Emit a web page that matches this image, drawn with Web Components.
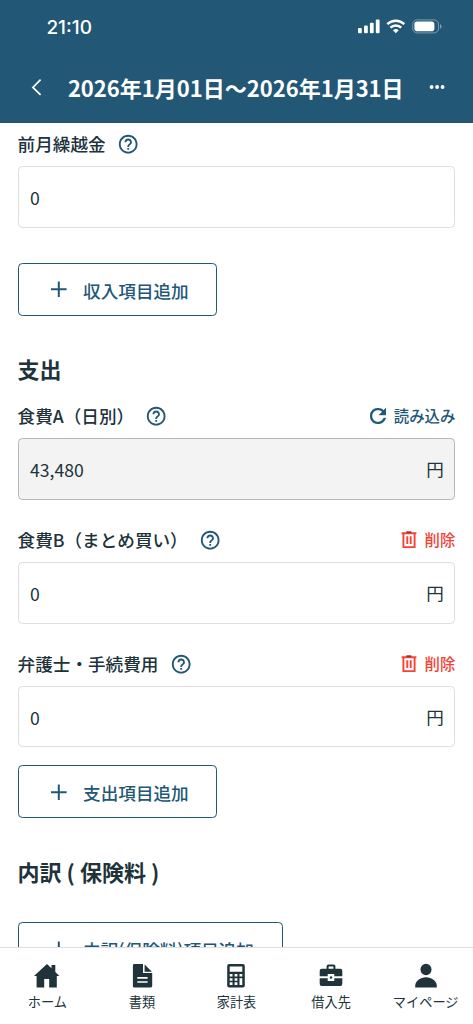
<!DOCTYPE html>
<html lang="ja">
<head>
<meta charset="utf-8">
<title>家計表</title>
<style>
html,body{margin:0;height:100%;overflow:hidden;background:#fff}
body{font-family:"Noto Sans CJK JP",sans-serif;color:#20323a}
</style>
</head>
<body>
<app-shell>
  <status-bar slot="top" time="21:10"></status-bar>
  <title-bar slot="top">2026年1月01日〜2026年1月31日</title-bar>
  <money-field label="前月繰越金" value="0"></money-field>
  <add-button style="margin-top:35.4px">収入項目追加</add-button>
  <section-title style="margin-top:36.5px">支出</section-title>
  <money-field style="margin-top:20.5px" label="食費A（日別）" value="43,480" unit="円" action="reload" locked></money-field>
  <money-field style="margin-top:29.4px" label="食費B（まとめ買い）" value="0" unit="円" action="delete"></money-field>
  <money-field style="margin-top:29.3px" label="弁護士・手続費用" value="0" unit="円" action="delete"></money-field>
  <add-button style="margin-top:17.7px">支出項目追加</add-button>
  <section-title style="margin-top:36.8px">内訳 ( 保険料 )</section-title>
  <add-button style="margin-top:35.4px;padding-right:28px">内訳(保険料)項目追加</add-button>
  <nav-item slot="nav" icon="home">ホーム</nav-item>
  <nav-item slot="nav" icon="doc">書類</nav-item>
  <nav-item slot="nav" icon="calc">家計表</nav-item>
  <nav-item slot="nav" icon="case">借入先</nav-item>
  <nav-item slot="nav" icon="user">マイページ</nav-item>
</app-shell>
<script>
const define = (name, render) => customElements.define(name, class extends HTMLElement {
  constructor() { super(); this.attachShadow({mode: 'open'}); }
  connectedCallback() { this.shadowRoot.innerHTML = render(this); }
});

define('app-shell', () => `<style>
:host{display:flex;flex-direction:column;height:100vh;overflow:hidden}
header{flex:none;height:122.6px;background:#225776;color:#fff}
main{flex:1;min-height:0;overflow:hidden;padding:10.4px 17.6px 0;display:flex;flex-direction:column}
::slotted(*){flex-shrink:0}
nav{flex:none;box-sizing:border-box;height:77.4px;border-top:1px solid #dcdedf;background:#fff;display:grid;grid-template-columns:repeat(5,1fr)}
</style><header><slot name="top"></slot></header><main><slot></slot></main><nav><slot name="nav"></slot></nav>`);

define('status-bar', el => `<style>
:host{display:flex;align-items:center;justify-content:space-between;height:54px;padding:0 31px 0 46.4px;font:500 19px/54px Inter,sans-serif}
svg{display:block}
span{padding-top:1px}
</style><span>${el.getAttribute('time')}</span>
<svg width="85" height="16" viewBox="0 0 85 16" fill="#fff">
<rect x="1" y="9" width="3.8" height="5.2" rx="1"/><rect x="7" y="6.6" width="3.8" height="7.6" rx="1"/><rect x="12.9" y="3.7" width="3.8" height="10.5" rx="1"/><rect x="18.8" y=".5" width="3.8" height="13.7" rx="1"/>
<g fill="none" stroke="#fff" stroke-width="2.5"><path d="M30.3 5.2a12.2 12.2 0 0 1 17 0"/><path d="M33.4 8.6a7.7 7.7 0 0 1 10.8 0"/></g><path d="M38.8 14.2l-2.9-3a4.3 4.3 0 0 1 5.8 0z"/>
<rect x="55.7" y=".9" width="25.8" height="13" rx="4.4" fill="none" stroke="#fff" stroke-opacity=".4"/><rect x="57.4" y="2.6" width="20" height="9.6" rx="2.8"/><path d="M83 5.1v4.6a2.5 2.5 0 0 0 0-4.6z" opacity=".45"/>
</svg>`);

define('title-bar', () => `<style>
:host{display:grid;grid-template-columns:67.5px 1fr 69px;align-items:center;height:67.6px}
h1{margin:0 0 1px;font-size:22px;font-weight:700;line-height:32px;white-space:nowrap;text-align:center}
svg{display:block}
.back{margin-left:30px;margin-top:-1px}.more{margin-left:24.5px;margin-top:-2px}
</style><svg class="back" width="14" height="18" viewBox="0 0 14 18" fill="none" stroke="#fff" stroke-width="1.7"><path d="M10.6 1.7 2.9 9.4l7.7 7.5"/></svg>
<h1><slot></slot></h1>
<svg class="more" width="18" height="6" viewBox="0 0 18 6" fill="#fff"><circle cx="2.6" cy="3" r="1.9"/><circle cx="8.1" cy="3" r="1.9"/><circle cx="13.6" cy="3" r="1.9"/></svg>`);

define('section-title', () => `<style>:host{display:block;font-size:22px;font-weight:700;line-height:32px;height:32px;white-space:pre}</style><slot></slot>`);

define('add-button', () => `<style>
:host{box-sizing:border-box;display:flex;align-items:center;align-self:flex-start;height:53px;border:1.1px solid #225776;border-radius:4.4px;color:#225776;padding:0 27px 0 32px;font-size:17.6px;font-weight:500;white-space:nowrap}
svg{display:block;margin-right:16.5px}
span{line-height:26px;padding-top:3px}
</style><svg width="16" height="16" viewBox="0 0 16 16" stroke="#225776" stroke-width="2"><path d="M0 8.3h15.6M7.8.5v15.5"/></svg><span><slot></slot></span>`);

define('help-icon', () => `<style>:host{display:block}svg{display:block}</style>
<svg width="22.4" height="22.4" viewBox="0 0 24 24" fill="#225776"><path d="M11 18h2v-2h-2v2zm1-16C6.48 2 2 6.48 2 12s4.48 10 10 10 10-4.48 10-10S17.52 2 12 2zm0 18c-4.41 0-8-3.59-8-8s3.59-8 8-8 8 3.59 8 8-3.59 8-8 8zm0-14c-2.21 0-4 1.79-4 4h2c0-1.1.9-2 2-2s2 .9 2 2c0 2-3 1.75-3 5h2c0-2.25 3-2.5 3-5 0-2.21-1.79-4-4-4z"/></svg>`);

define('action-link', el => {
  const del = el.getAttribute('kind') === 'delete';
  return `<style>
:host{display:flex;align-items:center;font-size:15.4px;font-weight:500;line-height:22px;color:${del ? '#f44336' : '#225776'}}
svg{display:block;margin-right:7.5px}
span{margin-top:-1px}
</style>${del
  ? `<svg width="16" height="18" viewBox="0 0 16 18" fill="none" stroke="#f44336" stroke-width="1.9"><path d="M.6 2.2h14.8M2.4 2.2v13.9h11.2V2.2M6.3 5.2v7.8M9.7 5.2v7.8"/><path d="M5.4 1.2h5" stroke="#a82b20" stroke-width="1.8"/></svg>`
  : `<svg width="16" height="16" viewBox="4 4 16 16" fill="#225776" stroke="#225776" stroke-width=".4"><path d="M17.65 6.35C16.2 4.9 14.21 4 12 4c-4.42 0-7.99 3.58-7.99 8s3.57 8 7.99 8c3.73 0 6.84-2.55 7.73-6h-2.08c-.82 2.33-3.04 4-5.65 4-3.31 0-6-2.69-6-6s2.69-6 6-6c1.66 0 3.14.69 4.22 1.78L13 11h7V4l-2.35 2.35z"/></svg>`}<span>${del ? '削除' : '読み込み'}</span>`;
});

define('money-field', el => {
  const a = n => el.getAttribute(n) || '';
  const locked = el.hasAttribute('locked');
  return `<style>
:host{display:block}
.row{display:flex;align-items:center;height:22px;margin-bottom:11px}
.label{font-size:17.6px;font-weight:500;line-height:24px;padding-top:1px;margin-right:11.2px}
action-link{margin-left:auto}
.box{box-sizing:border-box;height:61.6px;border:1px solid ${locked ? '#afb8ba' : '#dedede'};border-radius:4.4px;background:${locked ? '#f3f3f3' : '#fff'};display:flex;align-items:center;justify-content:space-between;padding:2px 10.5px 0 11.5px;font-size:17.6px;line-height:26px}
.unit{margin-top:-1px}
</style><div class="row"><span class="label">${a('label')}</span><help-icon></help-icon>${a('action') ? `<action-link kind="${a('action')}"></action-link>` : ''}</div>
<div class="box"><span>${a('value')}</span><span class="unit">${a('unit')}</span></div>`;
});

const icons = {
  home: '<path d="M13 1 0 13h2.6v11.5h7.6V16h5v8.5h7.6V13h2.6l-4.1-4V2h-3.8v3.2z"/>',
  doc: '<path d="M5.3 1h8.7v9.1h9.2v13a1.4 1.4 0 0 1-1.4 1.4H5.3A1.4 1.4 0 0 1 3.9 23V2.4A1.4 1.4 0 0 1 5.3 1zM15.6 1.4l7.3 7.3h-7.3z"/><path d="M8.3 14.8h10.3M8.3 19h10.3" stroke="#fff" stroke-width="1.7"/>',
  calc: '<rect x="4.2" y="1" width="17.6" height="23.5" rx="2"/><path fill="#fff" d="M6.7 3.6h12.6v5.2H6.7zM6.7 11h2.8v2.6H6.7zm4.9 0h2.8v2.6h-2.8zm4.9 0h2.8v2.6h-2.8zm-9.8 4.2h2.8v2.6H6.7zm4.9 0h2.8v2.6h-2.8zm4.9 0h2.8v6.7h-2.8zm-9.8 4.1h2.8v2.6H6.7zm4.9 0h2.8v2.6h-2.8z"/>',
  case: '<path fill-rule="evenodd" d="M8.6 5.8V3.2a1.7 1.7 0 0 1 1.7-1.7h5.4a1.7 1.7 0 0 1 1.7 1.7v2.6h4.9a2 2 0 0 1 2 2v5.5h-8V11H9.7v2.3H1.7V7.8a2 2 0 0 1 2-2zm2 0h4.8V3.5h-4.8zM1.7 15.3h8v2.6h6.6v-2.6h8v5.6a2 2 0 0 1-2 2H3.7a2 2 0 0 1-2-2z"/><circle cx="13" cy="14.5" r="1.2"/>',
  user: '<ellipse cx="13" cy="6.5" rx="5.5" ry="5.7"/><path d="M2.2 24.5v-1.7C2.2 18 7.4 14.2 13 14.2s10.8 3.8 10.8 8.6v1.7z"/>'
};
define('nav-item', el => `<style>
:host{display:flex;flex-direction:column;align-items:center;padding-top:15px;font-size:13.2px;line-height:20px;white-space:nowrap;min-width:0}
svg{display:block;margin-bottom:3px}
</style><svg width="26" height="26" viewBox="0 0 26 26" fill="#20323a">${icons[el.getAttribute('icon')]}</svg><span><slot></slot></span>`);
</script>
</body>
</html>
